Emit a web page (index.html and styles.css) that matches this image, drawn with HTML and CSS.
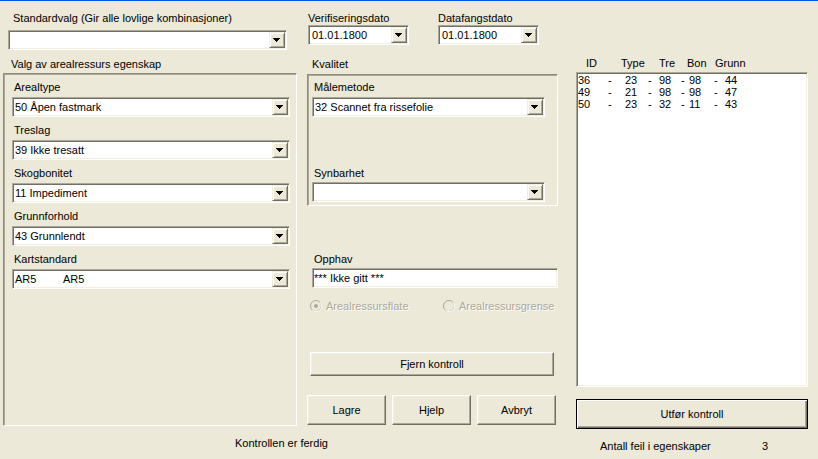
FILE: index.html
```html
<!DOCTYPE html>
<html lang="no">
<head>
<meta charset="utf-8">
<title>Kontroll av egenskaper</title>
<link rel="stylesheet" href="styles.css">
</head>
<body>
<div class="window">
  <div class="col col-left">
    <div class="label lbl-std">Standardvalg (Gir alle lovlige kombinasjoner)</div>
    <div class="combo combo-std"><span class="combo-text"></span><span class="ddbtn"><svg class="arrow" width="7" height="4" viewBox="0 0 7 4"><path d="M0 0h7v1h-1v1h-1v1h-1v1h-1v-1h-1v-1h-1v-1h-1z"/></svg></span></div>
    <div class="label lbl-valg">Valg av arealressurs egenskap</div>
    <div class="group group-left">
      <div class="field">
        <div class="label flabel">Arealtype</div>
        <div class="combo combo-left"><span class="combo-text">50 Åpen fastmark</span><span class="ddbtn"><svg class="arrow" width="7" height="4" viewBox="0 0 7 4"><path d="M0 0h7v1h-1v1h-1v1h-1v1h-1v-1h-1v-1h-1v-1h-1z"/></svg></span></div>
      </div>
      <div class="field">
        <div class="label flabel">Treslag</div>
        <div class="combo combo-left"><span class="combo-text">39 Ikke tresatt</span><span class="ddbtn"><svg class="arrow" width="7" height="4" viewBox="0 0 7 4"><path d="M0 0h7v1h-1v1h-1v1h-1v1h-1v-1h-1v-1h-1v-1h-1z"/></svg></span></div>
      </div>
      <div class="field">
        <div class="label flabel">Skogbonitet</div>
        <div class="combo combo-left"><span class="combo-text">11 Impediment</span><span class="ddbtn"><svg class="arrow" width="7" height="4" viewBox="0 0 7 4"><path d="M0 0h7v1h-1v1h-1v1h-1v1h-1v-1h-1v-1h-1v-1h-1z"/></svg></span></div>
      </div>
      <div class="field">
        <div class="label flabel">Grunnforhold</div>
        <div class="combo combo-left"><span class="combo-text">43 Grunnlendt</span><span class="ddbtn"><svg class="arrow" width="7" height="4" viewBox="0 0 7 4"><path d="M0 0h7v1h-1v1h-1v1h-1v1h-1v-1h-1v-1h-1v-1h-1z"/></svg></span></div>
      </div>
      <div class="field">
        <div class="label flabel">Kartstandard</div>
        <div class="combo combo-left"><span class="combo-text"><span class="code">AR5</span>AR5</span><span class="ddbtn"><svg class="arrow" width="7" height="4" viewBox="0 0 7 4"><path d="M0 0h7v1h-1v1h-1v1h-1v1h-1v-1h-1v-1h-1v-1h-1z"/></svg></span></div>
      </div>
    </div>
    <div class="label status">Kontrollen er ferdig</div>
  </div>

  <div class="col col-mid">
    <div class="dates">
      <div class="datefield">
        <div class="label">Verifiseringsdato</div>
        <div class="combo combo-date"><span class="combo-text">01.01.1800</span><span class="ddbtn"><svg class="arrow" width="7" height="4" viewBox="0 0 7 4"><path d="M0 0h7v1h-1v1h-1v1h-1v1h-1v-1h-1v-1h-1v-1h-1z"/></svg></span></div>
      </div>
      <div class="datefield">
        <div class="label">Datafangstdato</div>
        <div class="combo combo-date"><span class="combo-text">01.01.1800</span><span class="ddbtn"><svg class="arrow" width="7" height="4" viewBox="0 0 7 4"><path d="M0 0h7v1h-1v1h-1v1h-1v1h-1v-1h-1v-1h-1v-1h-1z"/></svg></span></div>
      </div>
    </div>
    <div class="label lbl-kval">Kvalitet</div>
    <div class="group group-mid">
      <div class="label flabel">Målemetode</div>
      <div class="combo combo-mid"><span class="combo-text">32 Scannet fra rissefolie</span><span class="ddbtn"><svg class="arrow" width="7" height="4" viewBox="0 0 7 4"><path d="M0 0h7v1h-1v1h-1v1h-1v1h-1v-1h-1v-1h-1v-1h-1z"/></svg></span></div>
      <div class="label flabel lbl-synb">Synbarhet</div>
      <div class="combo combo-mid combo-synb"><span class="combo-text"></span><span class="ddbtn"><svg class="arrow" width="7" height="4" viewBox="0 0 7 4"><path d="M0 0h7v1h-1v1h-1v1h-1v1h-1v-1h-1v-1h-1v-1h-1z"/></svg></span></div>
    </div>
    <div class="label lbl-opphav">Opphav</div>
    <div class="textbox">*** Ikke gitt ***</div>
    <div class="radios">
      <div class="radio radio-first">
        <svg width="12" height="12" viewBox="0 0 12 12"><circle cx="6" cy="6" r="5.5" fill="#ece9d8" stroke="#aca899"/><path d="M10.1 2.3A5.5 5.5 0 0 1 2.3 10.1" fill="none" stroke="#fff"/><circle cx="6" cy="6" r="2" fill="#aca899"/></svg>
        <span class="radio-text">Arealressursflate</span>
      </div>
      <div class="radio">
        <svg width="12" height="12" viewBox="0 0 12 12"><circle cx="6" cy="6" r="5.5" fill="#ece9d8" stroke="#aca899"/><path d="M10.1 2.3A5.5 5.5 0 0 1 2.3 10.1" fill="none" stroke="#fff"/></svg>
        <span class="radio-text">Arealressursgrense</span>
      </div>
    </div>
    <div class="btn btn-fjern">Fjern kontroll</div>
    <div class="btnrow">
      <div class="btn btn-small">Lagre</div>
      <div class="btn btn-small">Hjelp</div>
      <div class="btn btn-small">Avbryt</div>
    </div>
  </div>

  <div class="col col-right">
    <div class="listhead">
      <span>ID</span><span>Type</span><span>Tre</span><span>Bon</span><span>Grunn</span>
    </div>
    <div class="listbox">
      <div class="row"><span>36</span><span>-</span><span>23</span><span>-</span><span>98</span><span>-</span><span>98</span><span>-</span><span>44</span></div>
      <div class="row"><span>49</span><span>-</span><span>21</span><span>-</span><span>98</span><span>-</span><span>98</span><span>-</span><span>47</span></div>
      <div class="row"><span>50</span><span>-</span><span>23</span><span>-</span><span>32</span><span>-</span><span>11</span><span>-</span><span>43</span></div>
    </div>
    <div class="btn btn-default">Utfør kontroll</div>
    <div class="count">
      <span class="count-label">Antall feil i egenskaper</span><span class="count-value">3</span>
    </div>
  </div>
</div>
</body>
</html>
```

FILE: styles.css
```css
* { box-sizing: border-box; }

html, body {
  margin: 0;
  padding: 0;
  background: #ece9d8;
}

body {
  font-family: "Liberation Sans", Arial, sans-serif;
  font-size: 11px;
  color: #000;
}

.window {
  width: 818px;
  height: 459px;
  border-top: 1px solid #0054e3;
  background: #ece9d8;
  display: flex;
  padding-left: 3px;
  overflow: hidden;
}

.col {
  display: flex;
  flex-direction: column;
}

.label {
  height: 14px;
  line-height: 14px;
  white-space: nowrap;
}

/* ---------- sunken controls ---------- */
.combo,
.textbox,
.listbox {
  background: #fff;
  border: 1px solid;
  border-color: #aca899 #fff #fff #aca899;
  box-shadow: inset 1px 1px 0 #716f64, inset -1px -1px 0 #f1efe2;
  padding: 1px;
}

.combo {
  display: flex;
  height: 20px;
}

.combo-text {
  flex: 1;
  line-height: 16px;
  padding-left: 1px;
  white-space: nowrap;
  overflow: hidden;
}

.code {
  display: inline-block;
  width: 48px;
}

.ddbtn {
  width: 16px;
  height: 16px;
  background: #ece9d8;
  border: 1px solid;
  border-color: #f1efe2 #716f64 #716f64 #f1efe2;
  box-shadow: inset 1px 1px 0 #fff, inset -1px -1px 0 #aca899;
}

.arrow {
  display: block;
  margin: 5px 0 0 3px;
  fill: #000;
}

/* ---------- group frames ---------- */
.group {
  border: 1px solid;
  border-color: #8f8c7e #fff #fff #8f8c7e;
  box-shadow: inset 1px 1px 0 #aca899;
  display: flex;
  flex-direction: column;
}

/* ---------- left column ---------- */
.col-left {
  width: 294px;
  padding-top: 10px;
}

.lbl-std { margin-left: 10px; }

.combo-std {
  margin-top: 5px;
  margin-left: 5px;
  width: 279px;
}

.lbl-valg {
  margin-top: 7px;
  margin-left: 8px;
}

.group-left {
  margin-top: 2px;
  flex: 1;
  padding: 6px 6px 0 8px;
}

.field { margin-bottom: 6px; }

.flabel { margin-left: 2px; }

.combo-left {
  margin-top: 3px;
  width: 278px;
}

.status {
  margin-top: 10px;
  margin-left: 232px;
  margin-bottom: 9px;
}

/* ---------- middle column ---------- */
.col-mid {
  width: 251px;
  margin-left: 10px;
  padding-top: 10px;
}

.dates {
  display: flex;
  gap: 29px;
  margin-left: 1px;
}

.combo-date { width: 101px; }

.combo-date .combo-text { padding-left: 2px; }

.lbl-kval {
  margin-top: 12px;
  margin-left: 5px;
}

.group-mid {
  margin-top: 3px;
  height: 132px;
  padding: 5px 0 0 4px;
}

.combo-mid {
  margin-top: 3px;
  width: 233px;
}

.lbl-synb { margin-top: 49px; }

.combo-synb { margin-top: 2px; }

.lbl-opphav {
  margin-top: 46px;
  margin-left: 7px;
}

.textbox {
  margin-top: 2px;
  margin-left: 5px;
  width: 246px;
  height: 20px;
  line-height: 16px;
  padding-left: 1px;
}

.radios {
  display: flex;
  margin-top: 11px;
  margin-left: 3px;
  height: 14px;
}

.radio {
  display: flex;
  align-items: center;
  gap: 4px;
}

.radio svg { display: block; }

.radio-first { width: 133px; }

.radio-text {
  color: #aca899;
  text-shadow: 1px 1px 0 #fff;
  line-height: 14px;
}

/* ---------- buttons ---------- */
.btn {
  background: #ece9d8;
  border: 1px solid;
  border-color: #fff #716f64 #716f64 #fff;
  box-shadow: inset -1px -1px 0 #aca899, inset 1px 1px 0 #f1efe2;
  display: flex;
  align-items: center;
  justify-content: center;
  white-space: nowrap;
}

.btn-fjern {
  margin-top: 39px;
  margin-left: 3px;
  width: 244px;
  height: 24px;
}

.btnrow {
  display: flex;
  gap: 6px;
  margin-top: 19px;
}

.btn-small {
  width: 79px;
  height: 30px;
}

.btn-default {
  border: 1px solid #000;
  box-shadow: inset 1px 1px 0 #fff, inset -1px -1px 0 #716f64, inset -2px -2px 0 #aca899;
  height: 30px;
  margin-top: 12px;
}

/* ---------- right column ---------- */
.col-right {
  width: 232px;
  margin-left: 18px;
  padding-top: 55px;
  padding-bottom: 6px;
}

.listhead {
  display: grid;
  grid-template-columns: 35px 38px 28px 28px auto;
  margin-left: 10px;
  height: 14px;
  line-height: 14px;
}

.listbox {
  margin-top: 2px;
  flex: 1;
}

.row {
  display: grid;
  grid-template-columns: 30px 17px 23px 11px 22px 8px 25px 11px auto;
  line-height: 12px;
  height: 12px;
  white-space: nowrap;
}

.count {
  display: flex;
  margin-top: 10px;
  margin-left: 24px;
  height: 14px;
  line-height: 14px;
}

.count-label { width: 162px; }
```
